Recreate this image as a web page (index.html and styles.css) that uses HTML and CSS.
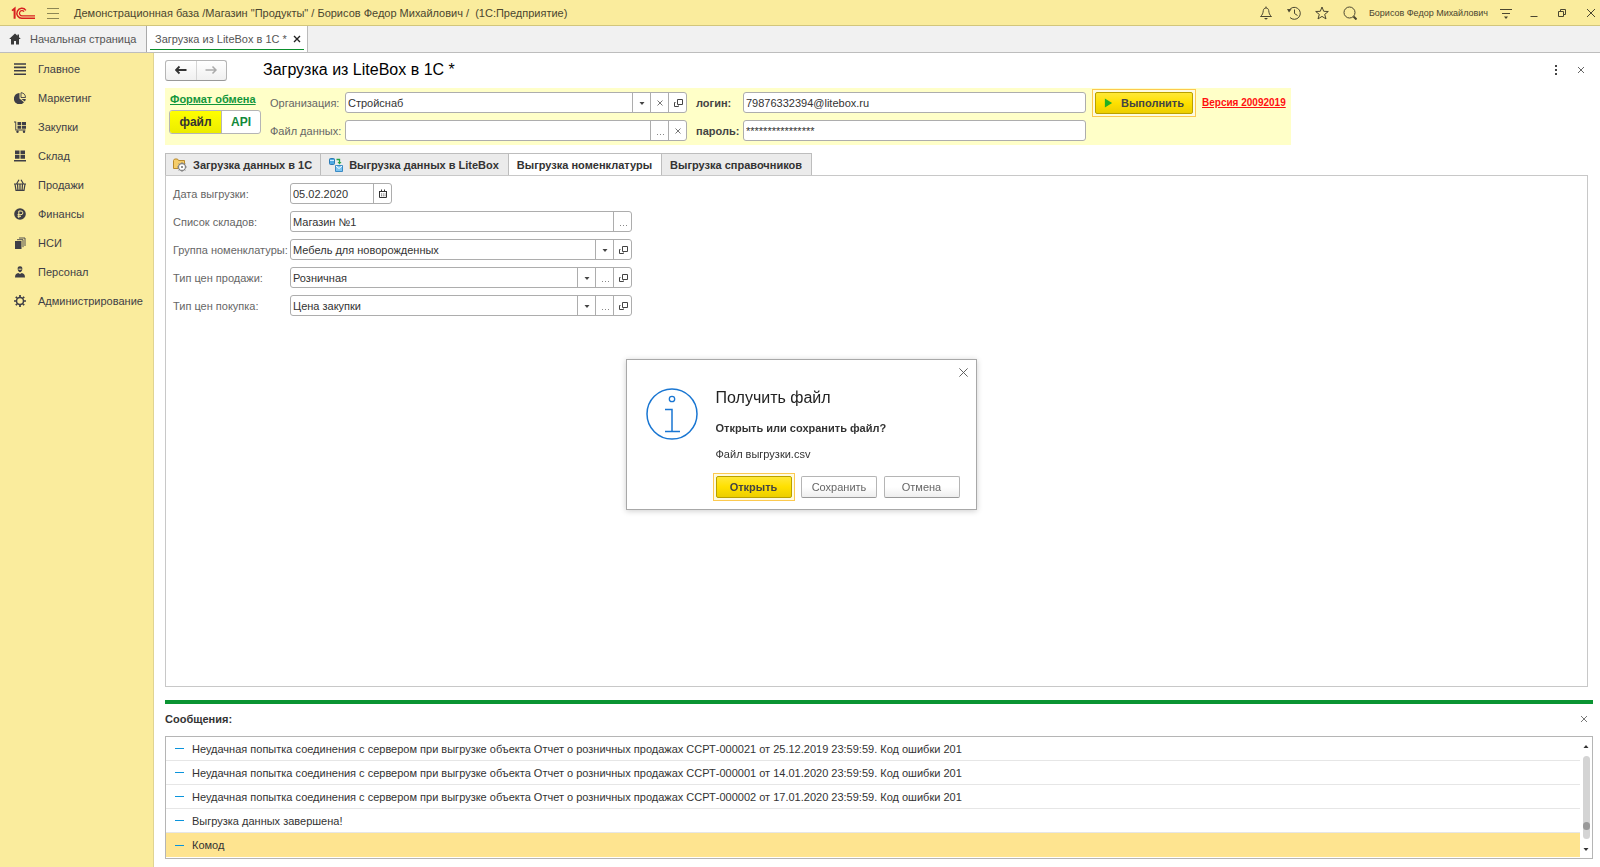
FILE: index.html
```html
<!DOCTYPE html>
<html lang="ru">
<head>
<meta charset="utf-8">
<title>Загрузка из LiteBox в 1С</title>
<link rel="stylesheet" href="styles.css">
</head>
<body>
<svg class="defs" aria-hidden="true">
  <symbol id="open" viewBox="0 0 12 12"><path d="M5.500 2.500h5v5h-5zM3.500 5.500h-1v4h4v-1" fill="none" stroke="currentColor"/></symbol>
  <symbol id="down" viewBox="0 0 12 12"><path d="M3.500 5h5L6 8z" fill="currentColor"/></symbol>
  <symbol id="cross" viewBox="0 0 12 12"><path d="M3.500 3.500l5 5M8.500 3.500l-5 5" stroke="#777"/></symbol>
  <symbol id="dots" viewBox="0 0 12 12"><path d="M3 9.500h1M6 9.500h1M9 9.500h1" stroke="#888"/></symbol>
  <symbol id="close" viewBox="0 0 12 12"><path d="M1.500 1.500l9 9M10.500 1.500l-9 9" stroke="currentColor"/></symbol>
</svg>
<header class="titlebar">
  <svg class="logo" viewBox="0 0 25 14" fill="none" stroke="#d8201f"><path d="M1 4.500L4 2v11M2.500 4.500h1V13" stroke-width="1.600"/><path d="M15.500 4.200A5.200 5.200 0 1 0 11.500 12.500H25" stroke-width="1.500"/><path d="M13.600 5.600A2.700 2.700 0 1 0 11.500 10H25" stroke-width="1.300"/></svg>
  <button class="icon-btn" aria-label="Главное меню"><svg viewBox="0 0 14 14" stroke="#8c8655"><path d="M1 2.500h12M1 7.500h12M1 12.500h12"/></svg></button>
  <h1 class="app-title">Демонстрационная база /Магазин "Продукты" / Борисов Федор Михайлович /&nbsp; (1С:Предприятие)</h1>
  <div class="tools">
    <button class="tool" aria-label="Оповещения"><svg viewBox="0 0 14 14" fill="none" stroke="currentColor"><path d="M1.500 10.500c2-1.500 2.500-3.500 2.800-6C4.600 2.800 5.600 2 7 2s2.400.8 2.700 2.500c.3 2.500.8 4.500 2.800 6zM7 .5V2"/><path d="M5 12h4l-2 1.800z" fill="currentColor" stroke="none"/></svg></button>
    <button class="tool" aria-label="История"><svg viewBox="0 0 14 14" fill="none" stroke="currentColor"><path d="M2 4.500A6 6 0 1 1 3 11.500M7.500 3.500v4l3 2"/><path d="M0 3l4.500.3L2 6.500z" fill="currentColor" stroke="none"/></svg></button>
    <button class="tool" aria-label="Избранное"><svg viewBox="0 0 14 14" fill="none" stroke="currentColor"><path d="M7 1l1.700 4.300 4.600.2-3.600 2.900 1.300 4.500L7 10.400l-4 2.500 1.300-4.500L.7 5.500l4.600-.2z"/></svg></button>
    <button class="tool" aria-label="Поиск"><svg viewBox="0 0 14 14" fill="none" stroke="currentColor"><circle cx="6.500" cy="6.500" r="5.500"/><path d="M10.500 10.500l3 3" stroke-width="2"/></svg></button>
    <button class="user">Борисов Федор Михайлович</button>
    <button class="tool" aria-label="Настройки"><svg viewBox="0 0 14 14" stroke="currentColor"><path d="M1 3.500h12M3 7.500h8"/><path d="M5 10.500h4l-2 2.500z" fill="currentColor" stroke="none"/></svg></button>
    <button class="tool" aria-label="Свернуть"><svg viewBox="0 0 14 14" stroke="currentColor"><path d="M3.500 10.500h7"/></svg></button>
    <button class="tool" aria-label="Развернуть"><svg viewBox="0 0 14 14" fill="none" stroke="currentColor"><path d="M3.500 5.500h5v5h-5zM5.500 5.500v-2h5v5h-2"/></svg></button>
    <button class="tool" aria-label="Закрыть"><svg viewBox="0 0 14 14" stroke="currentColor"><path d="M3 3l8 8M11 3l-8 8"/></svg></button>
  </div>
</header>
<nav class="pages">
  <a class="page home" href="#"><svg viewBox="0 0 12 12" fill="#3a3a3a"><path d="M6 .5L.2 6H2v5.500h3V8h2v3.500h3V6h1.800L10 4.200V1.500H8.500v1.300z"/></svg>Начальная страница</a>
  <a class="page current" href="#">Загрузка из LiteBox в 1С *<svg viewBox="0 0 12 12"><path d="M3 3l6 6M9 3l-6 6" stroke="#222" stroke-width="1.400"/></svg></a>
</nav>
<div class="workspace">
  <nav class="sidebar">
    <a href="#"><svg viewBox="0 0 12 12" stroke="currentColor" stroke-width="1.600"><path d="M0 1h12M0 4.400h12M0 7.800h12M0 11.200h12"/></svg>Главное</a>
    <a href="#"><svg viewBox="0 0 12 12" fill="currentColor"><path d="M5.500 1v5.500l4.500 3.800A5.700 5.700 0 1 1 5.500 1z"/><path d="M7 .7A5 5 0 0 1 11.500 5.500H7z" fill="none" stroke="currentColor" stroke-width=".9"/><path d="M7.300 7h4.500c-.1 1-.4 1.800-.9 2.600z"/></svg>Маркетинг</a>
    <a href="#"><svg viewBox="0 0 12 12" fill="currentColor"><path d="M3.500 1h3.700v3H3.500zM8 1h4v3H8zM3.500 4.800h3.700v3H3.500zM8 4.800h4v3H8zM0 .5h2.200v8h9.300v1H1.300v-8H0z"/><circle cx="3.500" cy="10.800" r="1.200"/><circle cx="10" cy="10.800" r="1.200"/></svg>Закупки</a>
    <a href="#"><svg viewBox="0 0 12 12" fill="currentColor"><path d="M1 .5h4.500v3.700H1zM6.500.5H11v3.700H6.500zM1 5h4.500v3.700H1zM6.500 5H11v3.700H6.500zM0 10h12v1.500H0z"/></svg>Склад</a>
    <a href="#"><svg viewBox="0 0 12 12" fill="none" stroke="currentColor"><path d="M2.500 5L5 .8M9.500 5L7 .8M0 5h12M1 5l1 6.300h8L11 5M3.500 5l.4 6M6 5v6M8.500 5l-.4 6" stroke-width="1.200"/></svg>Продажи</a>
    <a href="#"><svg viewBox="0 0 12 12"><circle cx="6" cy="6" r="5.800" fill="currentColor"/><path d="M4.800 10V3h2.200a1.700 1.700 0 0 1 0 3.700H3.500M3.500 8.300h3.500" fill="none" stroke="#faec9d"/></svg>Финансы</a>
    <a href="#"><svg viewBox="0 0 12 12" fill="currentColor"><path d="M1 4h6.500v8H1z"/><path d="M3 2.700h6v7.500M5 1h6v8" fill="none" stroke="currentColor" stroke-width=".9"/></svg>НСИ</a>
    <a href="#"><svg viewBox="0 0 12 12" fill="currentColor"><path d="M6 .3c1.800 0 2.600 1.300 2.300 3-.2 1.700-1.200 2.900-2.300 2.900S3.900 5 3.700 3.300C3.400 1.600 4.200.3 6 .3zM1 11.500c0-3 1.300-4 3.300-4.500L6 8l1.700-1c2 .5 3.300 1.500 3.300 4.500z"/><path d="M4.500 3.200h3" stroke="#faec9d"/></svg>Персонал</a>
    <a href="#"><svg viewBox="0 0 12 12" fill="none" stroke="currentColor"><circle cx="6" cy="6" r="3.500" stroke-width="1.500"/><path d="M6 0v2M6 10v2M0 6h2M10 6h2M1.800 1.800l1.400 1.400M8.800 8.800l1.400 1.400M10.200 1.800L8.800 3.200M3.200 8.800l-1.400 1.400" stroke-width="1.700"/></svg>Администрирование</a>
  </nav>
  <main class="content">
    <div class="form-head">
      <div class="history">
        <button aria-label="Назад"><svg viewBox="0 0 12 12" fill="none" stroke="#333" stroke-width="1.800"><path d="M.8 6h10.700M4.500 2.500L1 6l3.500 3.500"/></svg></button>
        <button aria-label="Вперед"><svg viewBox="0 0 12 12" fill="none" stroke="#aaa" stroke-width="1.500"><path d="M.5 6H11M7.500 2.500L11 6 7.500 9.500"/></svg></button>
      </div>
      <h2>Загрузка из LiteBox в 1С *</h2>
      <button class="plain" aria-label="Ещё"><svg viewBox="0 0 12 12" fill="#444"><path d="M5 1h2v2H5zM5 5h2v2H5zM5 9h2v2H5z"/></svg></button>
      <button class="plain" aria-label="Закрыть форму"><svg viewBox="0 0 12 12" stroke="#666"><path d="M3 3l6 6M9 3l-6 6"/></svg></button>
    </div>
    <section class="params">
      <div class="format">
        <a href="#">Формат обмена</a>
        <div class="toggle"><button class="on">файл</button><button>API</button></div>
      </div>
      <div class="param-grid">
        <label for="org">Организация:</label>
        <div class="field"><input id="org" value="Стройснаб"><button aria-label="Выбрать"><svg><use href="#down"/></svg></button><button aria-label="Очистить"><svg><use href="#cross"/></svg></button><button aria-label="Открыть"><svg><use href="#open"/></svg></button></div>
        <label class="strong" for="login">логин:</label>
        <div class="field"><input id="login" value="79876332394@litebox.ru"></div>
        <label for="file">Файл данных:</label>
        <div class="field"><input id="file"><button aria-label="Обзор"><svg><use href="#dots"/></svg></button><button aria-label="Очистить"><svg><use href="#cross"/></svg></button></div>
        <label class="strong" for="pass">пароль:</label>
        <div class="field"><input id="pass" value="****************"></div>
      </div>
      <span class="halo"><button class="primary run"><svg viewBox="0 0 10 10"><path d="M1 0l8 5-8 5z" fill="#22b022"/></svg>Выполнить</button></span>
      <a class="version" href="#">Версия 20092019</a>
    </section>
    <div class="tabs" role="tablist">
      <button role="tab"><svg viewBox="0 0 14 14"><path d="M.5 2.500l1-1.500h3l1 1.500h6v8H.5z" fill="#f5cd6a" stroke="#b98a2c"/><circle cx="9" cy="9" r="3.500" fill="#fff" stroke="#8c8c8c" stroke-width="1.300"/><circle cx="9" cy="9" r="1.100" fill="#777"/><path d="M9 4.300v1.400M9 12.300v1.400M4.300 9h1.400M12.300 9h1.400M5.700 5.700l1 1M11.300 11.300l1 1M12.300 5.700l-1 1M6.700 11.300l-1 1" stroke="#777"/></svg>Загрузка данных в 1С</button>
      <button role="tab"><svg viewBox="0 0 14 14"><rect x=".5" y=".5" width="5" height="6" rx="1" fill="#4fa9e2" stroke="#2b7ab5"/><path d="M1 2.500h4" stroke="#cfeaff"/><path d="M7.500 1.500h3v3" fill="none" stroke="#28a045" stroke-width="1.300"/><path d="M8.500 4h4l-2 2.500z" fill="#28a045"/><path d="M6.500 7.500h7v6h-7z" fill="#7cc4f1" stroke="#3a8ac4"/><path d="M7 8l3 2.500L13 8" fill="none" stroke="#fff"/></svg>Выгрузка данных в LiteBox</button>
      <button role="tab" class="active" aria-selected="true">Выгрузка номенклатуры</button>
      <button role="tab">Выгрузка справочников</button>
    </div>
    <section class="panel">
      <div class="rows">
        <label for="date">Дата выгрузки:</label>
        <div class="field date"><input id="date" value="05.02.2020"><button aria-label="Календарь"><svg viewBox="0 0 12 12" fill="none" stroke="#333"><path d="M2.500 3.500h7v6h-7z"/><path d="M2 3.500h8M4.500 1.500v2M7.500 1.500v2"/><path d="M4 6h4.500M4 7.800h4.500" stroke-dasharray="1 .8" stroke-width=".8"/></svg></button></div>
        <label for="stores">Список складов:</label>
        <div class="field"><input id="stores" value="Магазин №1"><button aria-label="Подобрать"><svg><use href="#dots"/></svg></button></div>
        <label for="group">Группа номенклатуры:</label>
        <div class="field"><input id="group" value="Мебель для новорожденных"><button aria-label="Выбрать"><svg><use href="#down"/></svg></button><button aria-label="Открыть"><svg><use href="#open"/></svg></button></div>
        <label for="sale">Тип цен продажи:</label>
        <div class="field"><input id="sale" value="Розничная"><button aria-label="Выбрать"><svg><use href="#down"/></svg></button><button aria-label="Подобрать"><svg><use href="#dots"/></svg></button><button aria-label="Открыть"><svg><use href="#open"/></svg></button></div>
        <label for="buy">Тип цен покупка:</label>
        <div class="field"><input id="buy" value="Цена закупки"><button aria-label="Выбрать"><svg><use href="#down"/></svg></button><button aria-label="Подобрать"><svg><use href="#dots"/></svg></button><button aria-label="Открыть"><svg><use href="#open"/></svg></button></div>
      </div>
    </section>
    <section class="messages">
      <div class="messages-head"><h3>Сообщения:</h3><button class="plain" aria-label="Закрыть сообщения"><svg viewBox="0 0 12 12" stroke="#777"><path d="M3 3l6 6M9 3l-6 6"/></svg></button></div>
      <div class="log">
        <ul>
          <li>Неудачная попытка соединения с сервером при выгрузке объекта Отчет о розничных продажах ССРТ-000021 от 25.12.2019 23:59:59. Код ошибки 201</li>
          <li>Неудачная попытка соединения с сервером при выгрузке объекта Отчет о розничных продажах ССРТ-000001 от 14.01.2020 23:59:59. Код ошибки 201</li>
          <li>Неудачная попытка соединения с сервером при выгрузке объекта Отчет о розничных продажах ССРТ-000002 от 17.01.2020 23:59:59. Код ошибки 201</li>
          <li>Выгрузка данных завершена!</li>
          <li class="selected">Комод</li>
        </ul>
        <div class="scroll"><svg viewBox="0 0 12 12"><path d="M3.500 8h5L6 5z" fill="#333"/></svg><div class="track"><i></i></div><svg><use href="#down"/></svg></div>
      </div>
    </section>
  </main>
</div>
<div class="modal">
  <div class="dialog" role="dialog" aria-labelledby="dlg">
    <button class="dialog-close" aria-label="Закрыть окно"><svg><use href="#close"/></svg></button>
    <svg class="info" viewBox="0 0 52 52" fill="none" stroke="#1976d2"><circle cx="26" cy="26" r="25" stroke-width="1.500"/><circle cx="26" cy="11" r="2.700" stroke-width="1.300"/><path d="M19 21.500h7V43M19 43.500h15" stroke-width="1.500"/></svg>
    <div class="dialog-body">
      <h2 id="dlg">Получить файл</h2>
      <p class="question">Открыть или сохранить файл?</p>
      <p>Файл выгрузки.csv</p>
      <div class="actions"><span class="halo"><button class="primary">Открыть</button></span><button class="secondary">Сохранить</button><button class="secondary">Отмена</button></div>
    </div>
  </div>
</div>
</body>
</html>
```
FILE: styles.css
```css
* { box-sizing: border-box; }
body {
  margin: 0;
  height: 100vh;
  display: flex;
  flex-direction: column;
  background: #fff;
  color: #333;
  font: 11px/14px "Liberation Sans", Arial, sans-serif;
}
button, input { font: inherit; color: inherit; margin: 0; padding: 0; border: 0; background: none; border-radius: 0; }
a { color: inherit; text-decoration: none; }
h1, h2, h3, p, ul { margin: 0; padding: 0; font-weight: normal; }
svg { flex: none; width: 12px; height: 12px; display: block; }
.defs { position: absolute; width: 0; height: 0; }

.titlebar {
  display: flex;
  align-items: center;
  height: 26px;
  padding: 0 2px 0 11px;
  background: #faec9d;
  border-bottom: 1px solid #d2c67c;
}
.logo { width: 24px; height: 14px; }
.icon-btn { margin-left: 11px; }
.icon-btn svg { width: 14px; height: 14px; }
.app-title { margin-left: 14px; font-size: 11px; color: #4a4630; }
.tools { display: flex; align-items: center; margin-left: auto; color: #4a4630; }
.tool { width: 28px; height: 24px; display: grid; place-items: center; }
.tool:last-child { width: 22px; justify-items: end; }
.tool svg { width: 14px; height: 14px; }
.user { padding: 0 4px 0 5px; font-size: 9px; }

.pages { display: flex; height: 27px; background: #f1f1f1; border-bottom: 1px solid #bdbdbd; color: #555; white-space: nowrap; }
.page { display: flex; align-items: center; }
.home { width: 147px; padding-left: 9px; gap: 9px; border-right: 1px solid #aaa; }
.current { padding: 0 4px 0 8px; gap: 4px; background: linear-gradient(#0a8f2c, #0a8f2c) center bottom 2px / calc(100% - 6px) 1px no-repeat #fff; border-right: 1px solid #bbb; }

.workspace { flex: 1; display: flex; min-height: 0; }
.sidebar { width: 154px; flex: none; padding-top: 1px; background: #faec9d; border-right: 1px solid #e0d492; color: #3e3e46; }
.sidebar a { display: flex; align-items: center; gap: 12px; height: 29px; padding-left: 14px; }

.content { flex: 1; min-width: 0; display: flex; flex-direction: column; padding: 6px 7px 8px 11px; }
.form-head { display: flex; align-items: center; height: 22px; padding-right: 6px; }
.history { display: flex; width: 62px; height: 21px; border: 1px solid #b5b5b5; border-bottom-color: #999; border-radius: 3px; background: linear-gradient(#fff, #f0f0f0); }
.history button { flex: 1; display: grid; place-items: center; }
.history button + button { border-left: 1px solid #d5d5d5; }
.form-head h2 { flex: 1; margin-left: 36px; font-size: 16px; line-height: 20px; color: #000; }
.plain { width: 12px; height: 12px; }
.form-head .plain + .plain { margin-left: 13px; }

.params { display: flex; align-self: flex-start; margin-top: 7px; height: 57px; padding: 4px 5px 4px 4px; background: #ffffc8; }
.format { width: 92px; display: flex; flex-direction: column; gap: 3px; }
.format a { color: #12963b; font-weight: bold; text-decoration: underline; padding-left: 1px; line-height: 15px; }
.toggle { display: flex; height: 24px; border: 1px solid #b5b5b5; border-radius: 3px; overflow: hidden; background: #fff; font-size: 12px; font-weight: bold; color: #12893b; }
.toggle button { flex: 1; }
.toggle .on { flex: none; width: 52px; background: linear-gradient(#ffff00, #ecec00); border-right: 1px solid #b5b5b5; color: #333; }
.param-grid { display: grid; grid-template-columns: 66px 342px 38px 343px; column-gap: 9px; row-gap: 7px; align-content: start; align-items: center; margin-left: 9px; white-space: nowrap; color: #666; }
.strong { font-weight: bold; color: #444; }
.field { display: flex; height: 21px; background: #fff; border: 1px solid #adadad; border-radius: 3px; color: #333; overflow: hidden; }
.field input { flex: 1; min-width: 0; padding: 0 2px; outline: 0; }
.field button { width: 18px; display: grid; place-items: center; border-left: 1px solid #adadad; color: #444; }
.halo { border: 1px solid #fcc94f; padding: 2px; background: #fffbe0; display: inline-flex; }
.primary { border: 1px solid #b8a000; border-radius: 2px; background: linear-gradient(#ffe838, #ffe000 50%, #ecce00); color: #444; font-weight: bold; height: 22px; }
.params .halo { align-self: flex-start; margin: -3px 0 0 6px; }
.run { width: 98px; display: flex; align-items: center; gap: 8px; padding-left: 8px; }
.run svg { width: 9px; height: 10px; }
.version { margin: 4px 0 0 6px; color: #ff1010; font-size: 10px; font-weight: bold; text-decoration: underline; }

.tabs { display: flex; margin-top: 8px; height: 22px; }
.tabs button { display: flex; align-items: center; gap: 6px; padding: 0 8px 0 7px; background: #ebebeb; border: 1px solid #bdbdbd; border-width: 1px 1px 0 0; font-weight: bold; color: #333; }
.tabs button:first-child { border-left-width: 1px; }
.tabs svg { width: 14px; height: 14px; }
.tabs .active { background: #fff; }
.tabs button:nth-child(n + 2) { padding: 0 9px 0 8px; }
.panel { flex: 1; min-height: 0; margin-right: 5px; padding: 7px; border: 1px solid #c8c8c8; }
.rows { display: grid; grid-template-columns: 109px 342px; column-gap: 8px; row-gap: 7px; align-items: center; white-space: nowrap; color: #666; }
.date { width: 102px; }

.messages { margin-top: 13px; border-top: 4px solid #0a9432; }
.messages-head { display: flex; align-items: center; justify-content: space-between; height: 32px; padding: 0 3px 2px 0; }
.messages-head h3 { font-size: 11px; font-weight: bold; color: #333; }
.log { display: flex; height: 123px; border: 1px solid #b5b5b5; }
.log ul { flex: 1; list-style: none; }
.log li { display: flex; align-items: center; gap: 8px; height: 24px; padding-left: 9px; border-bottom: 1px solid #e6e6e6; }
.log li::before { content: ""; width: 9px; height: 1px; background: #0a94dc; }
.log .selected { background: #fee490; border-bottom: 0; }
.scroll { width: 12px; padding: 3px 0; display: flex; flex-direction: column; align-items: center; gap: 4px; }
.track { flex: 1; width: 7px; border-radius: 4px; background: #d4d4d4; display: flex; align-items: flex-end; padding-bottom: 9px; }
.track i { width: 7px; height: 8px; border-radius: 4px; background: #999; }

.modal { position: fixed; inset: 0; display: grid; place-items: center; padding: 2px 0 0 2px; pointer-events: none; }
.dialog { position: relative; pointer-events: auto; width: 351px; display: flex; align-items: flex-start; padding: 28px 16px 8px 19px; background: #fff; border: 1px solid #a8a8a8; box-shadow: 0 1px 6px rgba(0, 0, 0, .2); }
.dialog-close { position: absolute; top: 7px; right: 7px; color: #555; }
.dialog-close svg { width: 11px; height: 11px; }
.info { width: 52px; height: 52px; }
.dialog-body { flex: 1; margin-left: 18px; }
.dialog h2 { font-size: 16px; line-height: 20px; color: #222; }
.question { margin: 13px 0 12px; font-weight: bold; }
.actions { display: flex; align-items: center; justify-content: space-between; margin: 12px 0 0 -3px; }
.actions button { width: 76px; }
.secondary { height: 22px; border: 1px solid #b5b5b5; border-bottom-color: #999; border-radius: 2px; background: linear-gradient(#fff 50%, #eee); color: #666; }
```
